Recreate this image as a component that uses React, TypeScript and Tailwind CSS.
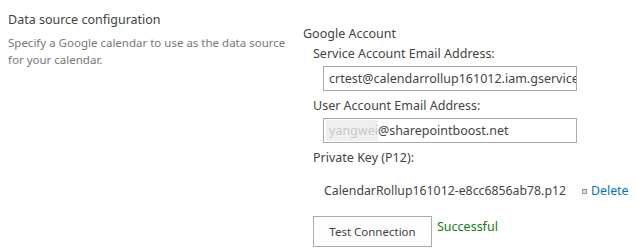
import React from 'react';

export default function App() {
  return (
    <div className="flex h-[251px] w-[637px] bg-white text-[#444] font-['Segoe_UI','Noto_Sans',sans-serif]">
      {/* Left description column */}
      <div className="w-[303px] shrink-0 pl-2 pt-[11px]">
        <div className="text-[12.5px] leading-[18px] text-[#444]">Data source configuration</div>
        <p className="mt-[5px] w-[280px] text-[11.5px] leading-[17px] text-[#777]">
          Specify a Google calendar to use as the data source for your calendar.
        </p>
      </div>

      {/* Right form column */}
      <div className="flex flex-col whitespace-nowrap pt-[25px] text-[12.5px] leading-[18px]">
        <div>Google Account</div>
        <div className="pl-[10px]">
          <div className="mt-[2px]">Service Account Email Address:</div>
          <div className="mt-[3px] pl-[10px]">
            <div className="h-[25px] w-[254px] overflow-hidden border border-[#ababab] pl-[5px] pr-1 leading-[23px]">
              crtest@calendarrollup161012.iam.gserviceaccount.com
            </div>
          </div>
          <div className="mt-[6px]">User Account Email Address:</div>
          <div className="mt-[3px] pl-[10px]">
            <div className="flex h-[25px] w-[254px] items-center overflow-hidden border border-[#ababab] pl-[2px]">
              <span className="bg-[#efefef] pl-[3px] leading-[21px] text-[#c9c9c9]">yangwei</span>
              <span>@sharepointboost.net</span>
            </div>
          </div>
          <div className="mt-[6px]">Private Key (P12):</div>
          <div className="mt-[15px] flex items-center pl-[11px] text-[12.3px]">
            <span>CalendarRollup161012-e8cc6856ab78.p12</span>
            <span className="ml-[16px] mr-[4px] inline-block h-[5px] w-[5px] border border-[#999] bg-[#ddd]" />
            <a className="text-[#0072c6]">Delete</a>
          </div>
          <div className="mt-[16px] flex items-start">
            <button className="h-[31px] w-[119px] border border-[#ababab] bg-[#fdfdfd] text-[11.5px] text-[#444]">
              Test Connection
            </button>
            <span className="ml-[5px] mt-[2px] text-[#107c10]">Successful</span>
          </div>
        </div>
      </div>
    </div>
  );
}
